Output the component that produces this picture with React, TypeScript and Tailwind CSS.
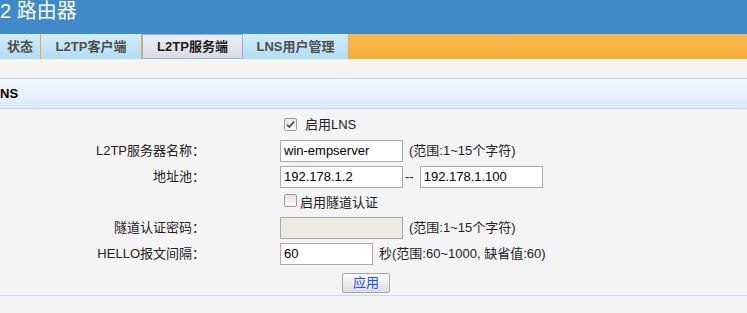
import React from 'react';

const tabs = [
  { label: '状态', width: 'w-[41px]', active: false },
  { label: 'L2TP客户端', width: 'w-[101px]', active: false },
  { label: 'L2TP服务端', width: 'w-[101px]', active: true },
  { label: 'LNS用户管理', width: 'w-[106px]', active: false },
];

function Checkbox({ checked }: { checked?: boolean }) {
  return (
    <span className="inline-flex w-[13px] h-[13px] border border-[#9a9a9a] rounded-[2px] bg-gradient-to-b from-[#e6e6e6] to-[#f8f8f8] items-center justify-center">
      {checked && (
        <svg width="9" height="9" viewBox="0 0 9 9">
          <path d="M1 4.6 L3.4 7 L8 1.6" fill="none" stroke="#555" strokeWidth="1.8" />
        </svg>
      )}
    </span>
  );
}

function Row({ label, children }: { label?: string; children: React.ReactNode }) {
  return (
    <div className="flex items-center h-[26px]">
      <div className="w-[205px] text-right text-[#222]">{label}</div>
      <div className="ml-[75px] flex items-center">{children}</div>
    </div>
  );
}

function TextBox({ value, w = 'w-[123px]', disabled }: { value?: string; w?: string; disabled?: boolean }) {
  return (
    <div
      className={`${w} h-[22px] border border-[#a9a9a9] px-[3px] leading-[20px] text-black ${
        disabled ? 'bg-[#ebebe4]' : 'bg-white'
      }`}
    >
      {value}
    </div>
  );
}

export default function App() {
  return (
    <div className="w-[747px] h-[313px] overflow-hidden bg-[#f4f4f4] text-[13px] font-['Liberation_Sans','Noto_Sans_CJK_SC',sans-serif]">
      <header className="h-[34px] bg-[#3f8ac8] text-white text-[20px] leading-[20px] pt-[1px]">2 路由器</header>

      <nav className="h-[25px] flex bg-gradient-to-b from-[#f8b952] to-[#f7ad33]">
        {tabs.map((t) =>
          t.active ? (
            <div
              key={t.label}
              className={`${t.width} h-full flex items-center justify-center font-bold border border-[#93b5e6] bg-gradient-to-b from-[#eceef2] to-[#d9dde3] text-[#1c1c1c]`}
            >
              {t.label}
            </div>
          ) : (
            <div
              key={t.label}
              className={`${t.width} h-full flex items-center justify-center font-bold border-r border-[#f4a63a] bg-gradient-to-b from-[#d3ecf8] to-[#b1ddf1] text-[#4f4f4f]`}
            >
              {t.label}
            </div>
          )
        )}
      </nav>

      <div className="h-[19px]" />

      <div className="h-[31px] border-y border-[#bcd8ee] bg-gradient-to-b from-[#f6faff] to-[#dce8f8] flex items-center">
        <span className="font-bold text-black">NS</span>
      </div>

      <div className="pt-[3px]">
        <Row>
          <span className="ml-[4px]">
            <Checkbox checked />
          </span>
          <span className="ml-[8px] text-[#222]">启用LNS</span>
        </Row>
        <Row label="L2TP服务器名称：">
          <TextBox value="win-empserver" />
          <span className="ml-[6px] text-[#222]">(范围:1~15个字符)</span>
        </Row>
        <Row label="地址池：">
          <TextBox value="192.178.1.2" />
          <span className="mx-[2px] text-[#222]">--</span>
          <span className="ml-[4px]">
            <TextBox value="192.178.1.100" />
          </span>
        </Row>
        <div className="flex items-center h-[25px]">
          <span className="ml-[284px]">
            <Checkbox />
          </span>
          <span className="ml-[3px] text-[#222]">启用隧道认证</span>
        </div>
        <Row label="隧道认证密码：">
          <TextBox disabled />
          <span className="ml-[6px] text-[#222]">(范围:1~15个字符)</span>
        </Row>
        <Row label="HELLO报文间隔：">
          <TextBox value="60" w="w-[93px]" />
          <span className="ml-[6px] text-[#222]">秒(范围:60~1000, 缺省值:60)</span>
        </Row>
        <div className="pt-[6px] pb-[2px] pl-[342px]">
          <button className="w-[48px] h-[20px] border border-[#a6a6a6] rounded-[2px] bg-gradient-to-b from-[#fdfdfd] to-[#dcdcdc] text-[#1f4fff] leading-[18px]">
            应用
          </button>
        </div>
        <div className="border-t border-[#c8dcf0]" />
      </div>
    </div>
  );
}
